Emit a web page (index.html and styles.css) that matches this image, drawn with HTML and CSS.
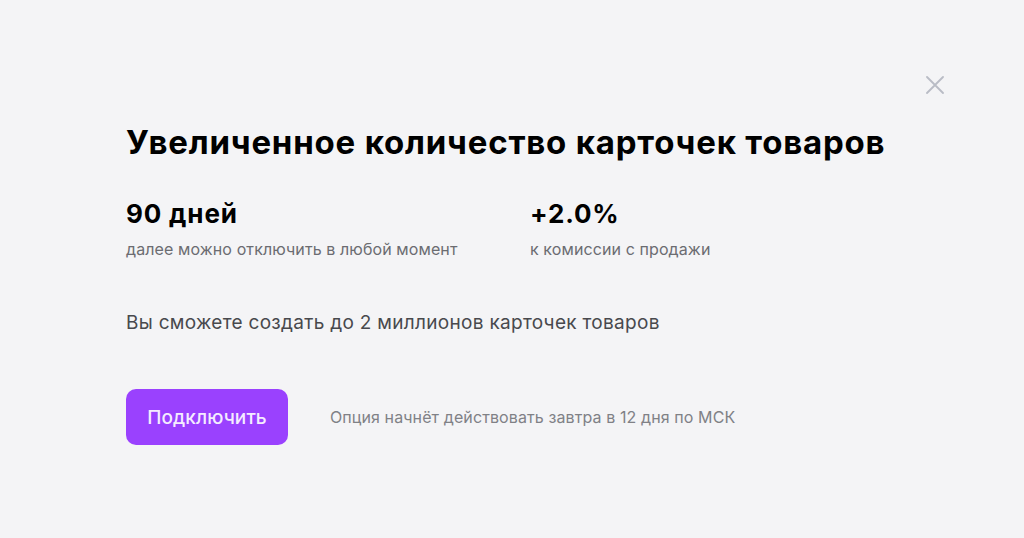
FILE: index.html
```html
<!DOCTYPE html>
<html lang="ru">

<head>
	<meta charset="UTF-8">
	<title>Увеличенное количество карточек товаров</title>
	<link rel="stylesheet" href="styles.css">
</head>

<body>
	<div id="optionModal">
		<button class="closeButton" aria-label="Закрыть">
			<svg width="18" height="18" viewBox="0 0 18 18">
				<path d="M1 1 L17 17 M17 1 L1 17" stroke="#b9bcc5" stroke-width="1.8" stroke-linecap="round" fill="none"/>
			</svg>
		</button>
		<h1 class="modalTitle">Увеличенное количество карточек товаров</h1>
		<div class="terms">
			<div class="term">
				<div class="termValue">90 дней</div>
				<div class="termNote">далее можно отключить в любой момент</div>
			</div>
			<div class="term">
				<div class="termValue">+2.0%</div>
				<div class="termNote">к комиссии с продажи</div>
			</div>
		</div>
		<p class="description">Вы сможете создать до 2 миллионов карточек товаров</p>
		<div class="actions">
			<button class="connectButton">Подключить</button>
			<span class="startNote">Опция начнёт действовать завтра в 12 дня по МСК</span>
		</div>
	</div>
</body>

</html>
```

FILE: styles.css
```css
body {
    font-family: Inter, "Noto Sans", sans-serif;
    background-color: #f4f4f6;
    color: #000;
    margin: 0;
    height: 538px;
}
#optionModal {
    position: relative;
    padding: 115px 0 0 126px;
}
.closeButton {
    position: absolute;
    top: 76px;
    left: 926px;
    background: none;
    border: none;
    padding: 0;
    cursor: pointer;
}
.modalTitle {
    margin: 0;
    font-size: 33px;
    font-weight: 700;
    line-height: 54px;
    letter-spacing: 0.8px;
}
.terms {
    display: flex;
    margin-top: 28px;
}
.term {
    width: 404px;
}
.termValue {
    font-size: 26px;
    font-weight: 700;
    line-height: 34px;
    letter-spacing: 0.85px;
}
.termNote {
    margin-top: 7px;
    font-size: 16px;
    line-height: 22px;
    letter-spacing: 0.1px;
    color: #6b6c71;
}
.description {
    margin: 50px 0 0;
    font-size: 19px;
    line-height: 26px;
    letter-spacing: 0.3px;
    color: #48494d;
}
.actions {
    display: flex;
    align-items: center;
    margin-top: 53px;
}
.connectButton {
    width: 162px;
    height: 56px;
    border: none;
    border-radius: 10px;
    background-color: #9a41fe;
    color: #f4ecff;
    font-family: inherit;
    font-size: 19px;
    font-weight: 500;
    letter-spacing: 0.1px;
    cursor: pointer;
}
.startNote {
    margin-left: 42px;
    font-size: 16px;
    letter-spacing: 0.1px;
    color: #808186;
}
```
